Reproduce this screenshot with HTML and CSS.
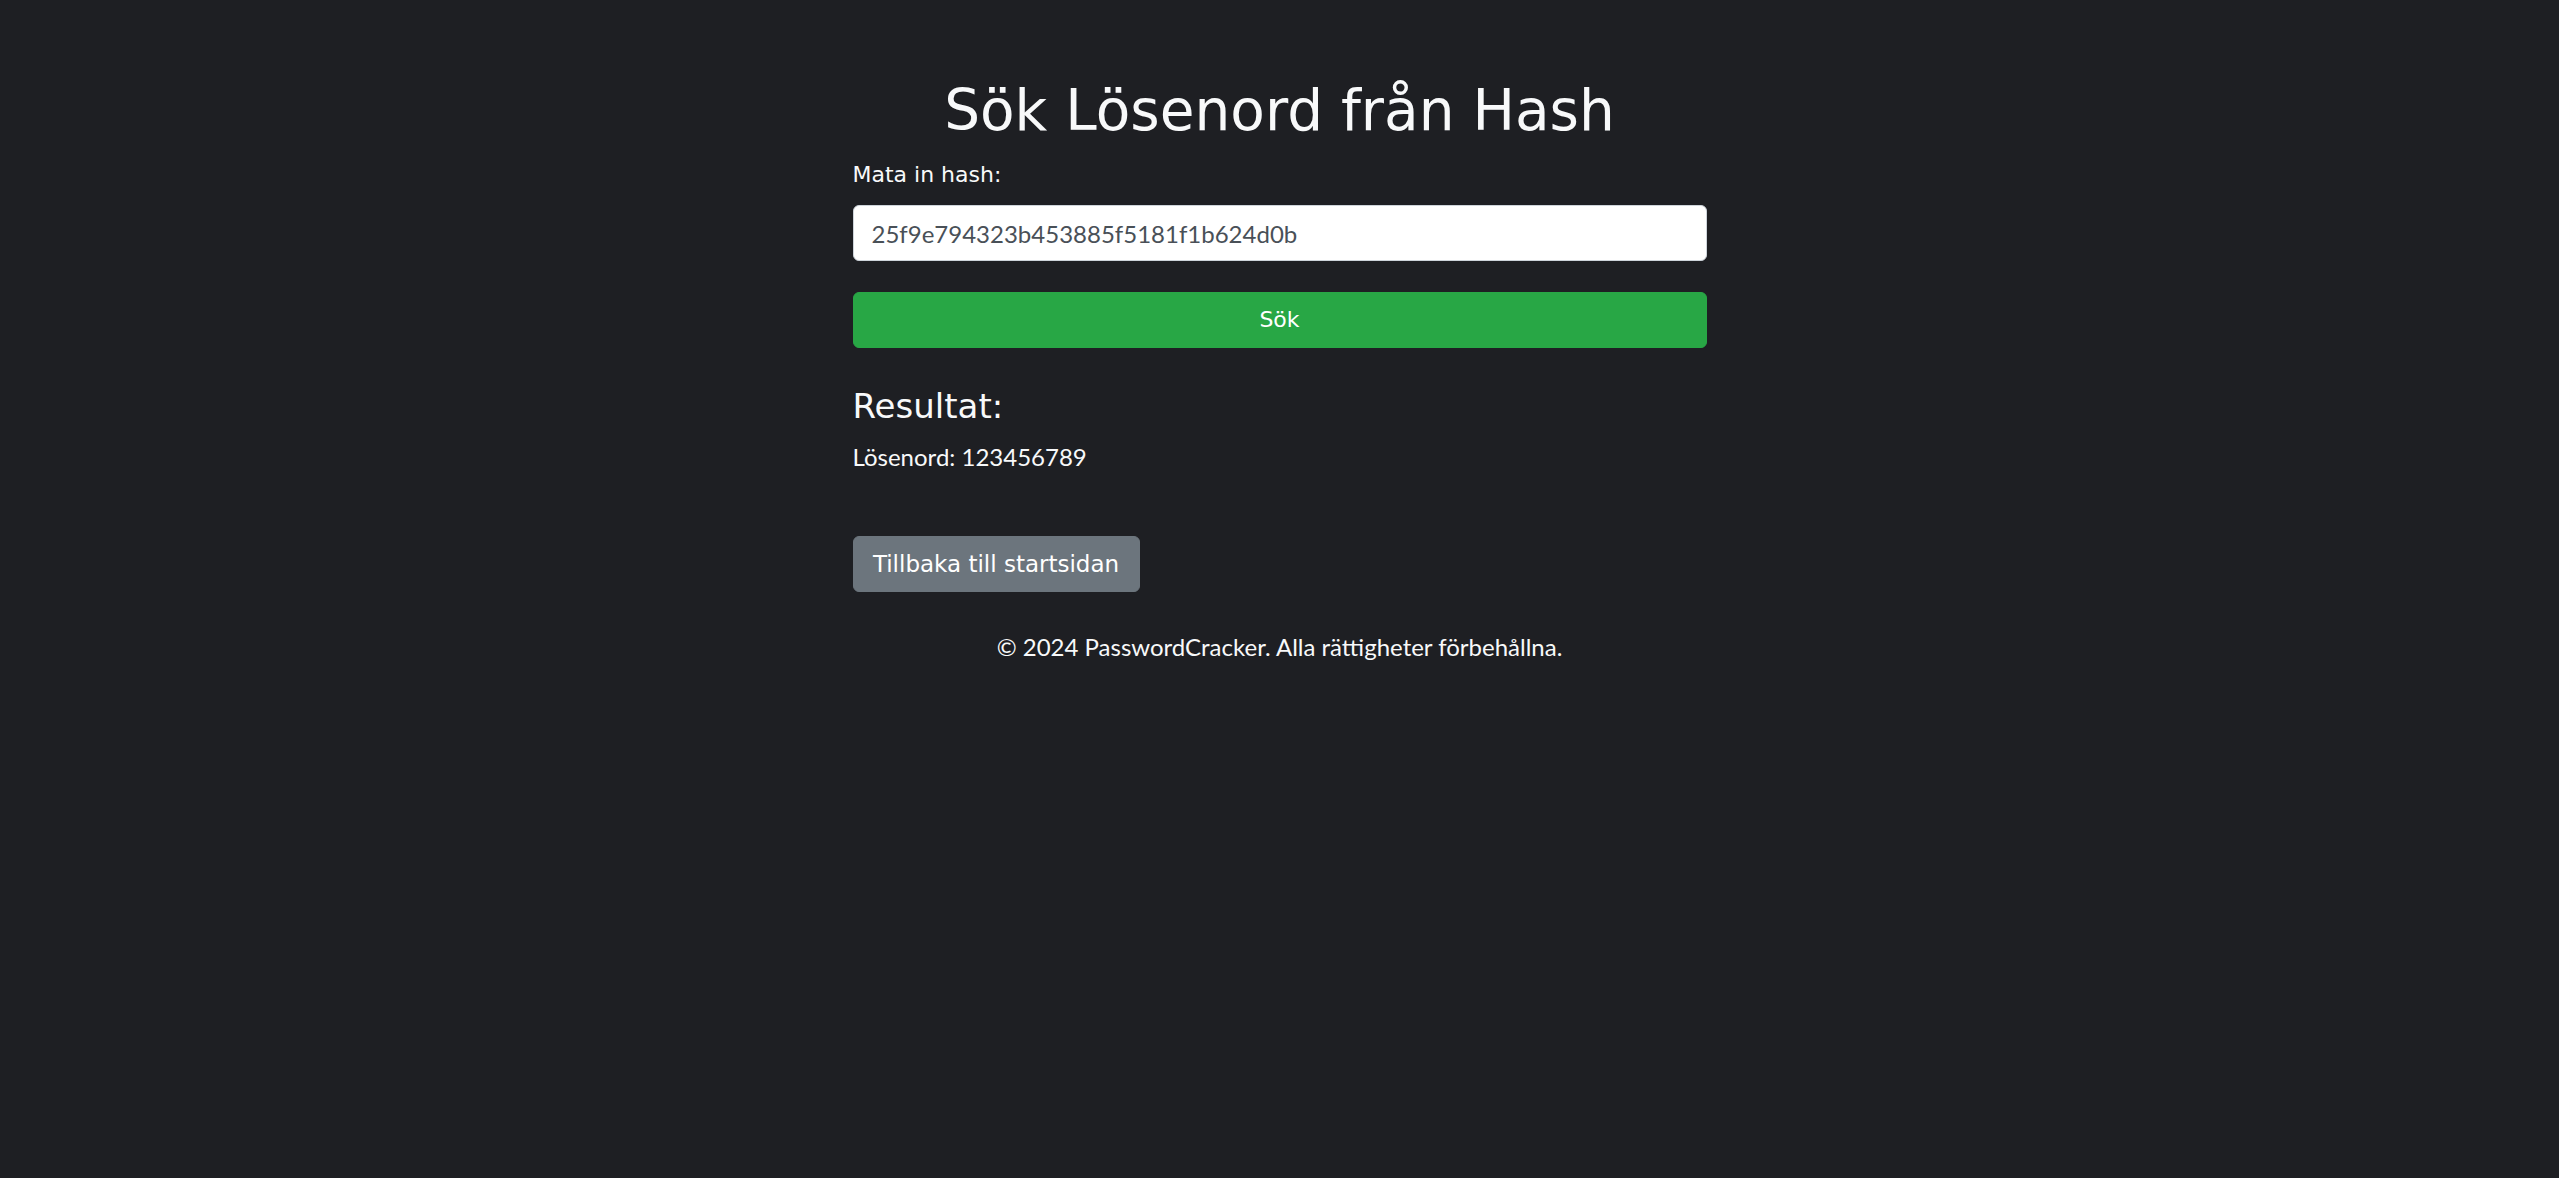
FILE: index.html
```html
<!DOCTYPE html>
<html lang="sv">
<head>
<meta charset="utf-8">
<title>Sök Lösenord från Hash</title>
<link rel="stylesheet" href="styles.css">
</head>
<body>
<main class="container">
  <h1 class="title">Sök Lösenord från Hash</h1>
  <form class="search-form">
    <div class="form-group">
      <label class="label" for="hash">Mata in hash:</label>
      <input class="form-control" id="hash" type="text" value="25f9e794323b453885f5181f1b624d0b">
    </div>
    <button class="btn btn-success" type="button">Sök</button>
  </form>
  <section class="result">
    <h4 class="result-title">Resultat:</h4>
    <p class="result-text">Lösenord: 123456789</p>
  </section>
  <div class="back">
    <a class="btn btn-secondary" href="#">Tillbaka till startsidan</a>
  </div>
  <footer class="footer">© 2024 PasswordCracker. Alla rättigheter förbehållna.</footer>
</main>
</body>
</html>
```
FILE: styles.css
```css
html, body {
  margin: 0;
  padding: 0;
  background: #1e1f23;
}
body {
  font-family: "Segoe UI", "Lato", "Noto Sans", sans-serif;
  font-size: 24px;
  line-height: 1.5;
  color: #f8f9fa;
}
.container {
  width: 854px;
  margin: 72px auto 0;
}
.title {
  font-family: "Comic Sans MS", "DejaVu Sans", sans-serif;
  font-weight: 400;
  font-size: 56.5px;
  line-height: 72px;
  text-align: center;
  margin: 0 0 9px;
  padding-top: 3px;
}
.form-group {
  margin: 0 0 31px;
}
.label {
  display: block;
  font-family: "Comic Sans MS", "DejaVu Sans", sans-serif;
  font-size: 22px;
  line-height: 36px;
  margin: 0 0 13px;
  padding-top: 1px;
  height: 35px;
}
.form-control {
  display: block;
  box-sizing: border-box;
  width: 100%;
  height: 56px;
  padding: 9px 18px;
  font-family: "Segoe UI", "Lato", "Noto Sans", sans-serif;
  font-size: 24px;
  line-height: 36px;
  color: #495057;
  background: #fff;
  border: 1px solid #ced4da;
  border-radius: 6px;
  outline: none;
}
.btn {
  display: inline-block;
  box-sizing: border-box;
  height: 56px;
  padding: 9px 18px;
  font-family: "Comic Sans MS", "DejaVu Sans", sans-serif;
  font-size: 22px;
  line-height: 36px;
  color: #fff;
  text-align: center;
  text-decoration: none;
  border: 1px solid transparent;
  border-radius: 6px;
  cursor: pointer;
}
.btn-success {
  display: block;
  width: 100%;
  background: #28a745;
  border-color: #28a745;
}
.btn-secondary {
  width: 287px;
  padding: 9px 0;
  font-size: 23px;
  background: #6c757d;
  border-color: #6c757d;
}
.result {
  margin-top: 36px;
}
.result-title {
  font-family: "Comic Sans MS", "DejaVu Sans", sans-serif;
  font-weight: 400;
  font-size: 34px;
  line-height: 43px;
  margin: 0 0 12px;
  padding-top: 1px;
  height: 42px;
}
.result-text {
  margin: 0;
  font-size: 24px;
  line-height: 36px;
}
.back {
  display: flex;
  margin-top: 61px;
}
.footer {
  margin-top: 37px;
  text-align: center;
  font-size: 24px;
  line-height: 36px;
}
```
